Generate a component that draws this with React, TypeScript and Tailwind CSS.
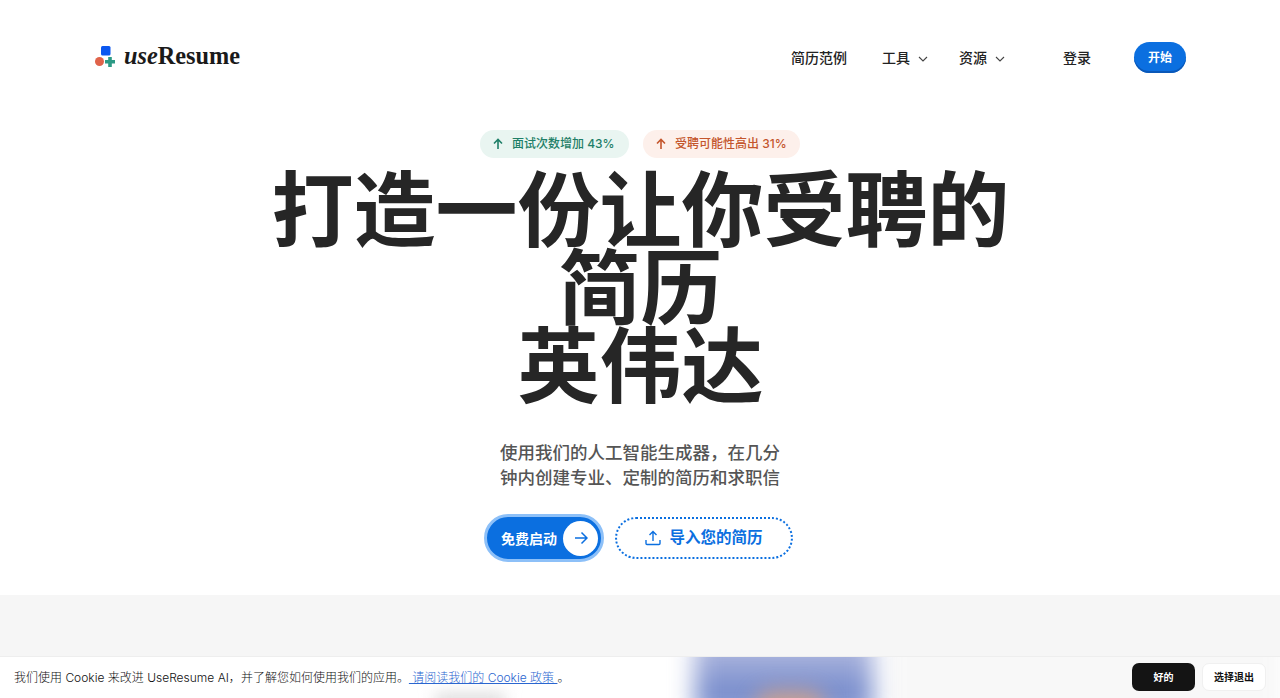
const cjk = "font-['Inter','Noto_Sans_CJK_SC',sans-serif]";
const comma = "\uFF0C";

function Chevron() {
  return (
    <svg width="10" height="6" viewBox="0 0 10 6" fill="none" stroke="#444" strokeWidth="1.1" className="mt-[2px]">
      <path d="M1 1l4 4 4-4" />
    </svg>
  );
}

function Up({ color }: { color: string }) {
  return (
    <svg width="12" height="12" viewBox="0 0 12 12" fill="none" stroke={color} strokeWidth="1.6">
      <path d="M6 11V1.5M2 5.5l4-4 4 4" />
    </svg>
  );
}

export default function App() {
  return (
    <div className={`relative h-[698px] w-[1280px] overflow-hidden bg-white ${cjk}`}>
      <header className="flex h-[130px] items-start justify-between pl-[95px] pr-[94px] pt-[42px]">
        <div className="flex items-center gap-[8px]">
          <svg width="21" height="21" viewBox="0 0 21 21">
            <rect x="6" y="0" width="9.500" height="9.500" rx="1.500" fill="#0b57f0" />
            <circle cx="4.500" cy="15.500" r="4.500" fill="#e0634a" />
            <path d="M13.200 11h3.600v3h3.200v3.600h-3.200V21h-3.600v-3.400H10V14h3.200z" fill="#2c9a85" />
          </svg>
          <div className="font-['Liberation_Serif',serif] text-[24.300px] leading-[28px] text-[#1a1a1a]">
            <span className="font-bold italic">use</span>
            <span className="font-bold">Resume</span>
          </div>
        </div>
        <nav className="flex items-center text-[14px] font-medium text-[#222]">
          <span className="mr-[35px]">简历范例</span>
          <span className="mr-[8px]">工具</span>
          <span className="mr-[31px]"><Chevron /></span>
          <span className="mr-[8px]">资源</span>
          <span className="mr-[58px]"><Chevron /></span>
          <span className="mr-[43px]">登录</span>
          <span className="flex h-[31px] w-[52px] items-center justify-center rounded-full bg-[#0b6fe0] text-[12px] font-bold text-white shadow-[inset_0_-2px_0_#0a58b8]">开始</span>
        </nav>
      </header>

      <main className="flex h-[465px] flex-col items-center">
        <div className="flex gap-[14px] text-[12px] font-medium">
          <div className="flex h-[28px] w-[149px] items-center gap-[8px] rounded-full bg-[#e9f5f1] pl-[12px] text-[#1f7f68]">
            <Up color="#1f7f68" />
            <span>面试次数增加 43%</span>
          </div>
          <div className="flex h-[28px] w-[157px] items-center gap-[8px] rounded-full bg-[#fdf0eb] pl-[12px] text-[#c4562d]">
            <Up color="#c4562d" />
            <span>受聘可能性高出 31%</span>
          </div>
        </div>
        <h1 className="mt-[14px] w-[760px] pl-[1px] text-center text-[82px] font-bold leading-[78px] text-[#262626]">
          打造一份让你受聘的简历<br />英伟达
        </h1>
        <p className="mt-[34px] w-[290px] text-center text-[17.500px] font-medium leading-[25px] text-[#555]">
          使用我们的人工智能生成器{comma}在几分钟内创建专业、定制的简历和求职信
        </p>
        <div className="mt-[24px] flex items-center gap-[11px] pr-[3px]">
          <button className="flex h-[48px] w-[120px] items-center justify-between rounded-full border-[3px] border-[#8dc0f8] bg-[#0b6fe0] pl-[14px] pr-[3px] text-[14px] font-semibold text-white">
            免费启动
            <span className="flex h-[35px] w-[35px] items-center justify-center rounded-full bg-white">
              <svg width="14" height="14" viewBox="0 0 14 14" fill="none" stroke="#0b6fe0" strokeWidth="1.5">
                <path d="M1 7h12M7.500 1.500L13 7l-5.500 5.500" />
              </svg>
            </span>
          </button>
          <button className="flex h-[42px] w-[178px] items-center justify-center gap-[8px] rounded-full border-2 border-dotted border-[#0b6fe0] text-[15.500px] font-semibold text-[#0b6fe0]">
            <svg width="16" height="16" viewBox="0 0 16 16" fill="none" stroke="#0b6fe0" strokeWidth="1.4">
              <path d="M1 10v3.500a1 1 0 001 1h12a1 1 0 001-1V10M8 11V1.500M4.500 5L8 1.500 11.500 5" />
            </svg>
            导入您的简历
          </button>
        </div>
      </main>

      <section className="h-[103px] bg-[#f6f6f6]" />

      <div className="absolute inset-x-0 bottom-0 flex h-[42px] items-center justify-between overflow-hidden border-t border-[#eeeeee] bg-white pl-[14px] pr-[14px] text-[12px] font-light text-[#111]">
        <div className="absolute left-[890px] right-0 top-[-20px] h-[80px] bg-[#f8f8f8] blur-[10px]" />
        <div className="absolute left-[695px] top-[-20px] h-[80px] w-[178px] bg-[linear-gradient(to_bottom,#a8b2dc_20px,#7b8fcd_50px)] blur-[12px]" />
        <div className="absolute left-[755px] top-[34px] h-[36px] w-[70px] rounded-full bg-[#c8a090] blur-[10px]" />
        <div className="absolute left-[435px] top-[36px] h-[20px] w-[70px] bg-[#dedede] blur-[8px]" />
        <p className="relative">
          我们使用 Cookie 来改进 UseResume AI{comma}并了解您如何使用我们的应用。
          <a className="text-[#2a66d0] underline"> 请阅读我们的 Cookie 政策 </a>。
        </p>
        <div className="relative mb-[1px] flex items-center gap-[7px] text-[10px] font-bold">
          <span className="flex h-[28px] w-[63px] items-center justify-center rounded-[7px] bg-[#141414] text-white">好的</span>
          <span className="flex h-[28px] w-[64px] items-center justify-center rounded-[7px] border border-[#f0f0f0] bg-white text-[#111]">选择退出</span>
        </div>
      </div>
    </div>
  );
}
